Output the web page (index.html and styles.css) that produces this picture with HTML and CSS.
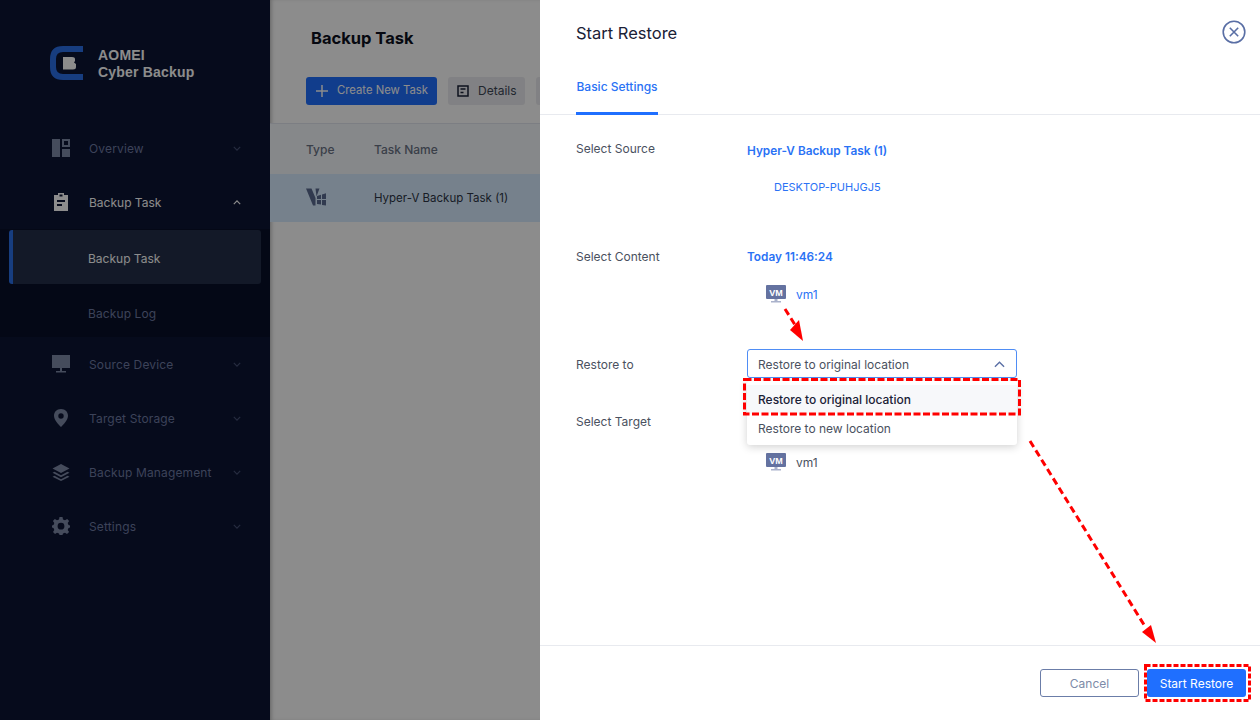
FILE: index.html
```html
<!DOCTYPE html>
<html lang="en">
<head>
<meta charset="utf-8">
<title>Start Restore</title>
<link rel="stylesheet" href="styles.css">
</head>
<body>
<div class="app">
  <aside class="sidebar">
    <div class="brand">
      <svg class="brand-logo" viewBox="0 0 34 34"><path d="M33 3H13Q3 3 3 13V21Q3 31 13 31H33" fill="none" stroke="#2a6fe8" stroke-width="6"/><path d="M13 11H22Q25 11 25 13V15L24 16.500L26 18V21Q26 23.500 23 23.500H13Z" fill="#fff"/></svg>
      <div class="brand-name">AOMEI<br>Cyber Backup</div>
    </div>
    <nav class="menu">
      <div class="menu-item"><svg class="menu-icon" viewBox="0 0 18 18"><path d="M0 0H8V18H0ZM10 0H18V8H10ZM12 2V6H16V2ZM10 10H18V18H10Z" fill-rule="evenodd"/></svg><span class="menu-label">Overview</span><svg class="chev" viewBox="0 0 10 6"><path d="M1 1L5 5L9 1"/></svg></div>
      <div class="menu-item open"><svg class="menu-icon" viewBox="0 0 18 18"><path d="M6 0H12V2H16V18H2V2H6ZM7.500 1.500V3.500H10.500V1.500ZM5 7V9H13V7ZM5 11V13H10V11Z" fill-rule="evenodd"/></svg><span class="menu-label">Backup Task</span><svg class="chev" viewBox="0 0 10 6"><path d="M1 5L5 1L9 5"/></svg></div>
      <div class="submenu">
        <div class="sub-item active">Backup Task</div>
        <div class="sub-item">Backup Log</div>
      </div>
      <div class="menu-item"><svg class="menu-icon" viewBox="0 0 18 18"><path d="M0 0H18V13H10V16H14V17.500H4V16H8V13H0Z"/></svg><span class="menu-label">Source Device</span><svg class="chev" viewBox="0 0 10 6"><path d="M1 1L5 5L9 1"/></svg></div>
      <div class="menu-item"><svg class="menu-icon" viewBox="0 0 18 18"><path d="M9 0C4.500 0 2 3.200 2 6.800C2 11 6.500 15.500 9 18C11.500 15.500 16 11 16 6.800C16 3.200 13.500 0 9 0ZM9 4.300A2.700 2.700 0 1 1 9 9.700A2.700 2.700 0 1 1 9 4.300Z" fill-rule="evenodd"/></svg><span class="menu-label">Target Storage</span><svg class="chev" viewBox="0 0 10 6"><path d="M1 1L5 5L9 1"/></svg></div>
      <div class="menu-item"><svg class="menu-icon" viewBox="0 0 18 18"><path d="M9 1L17.500 5.500L9 10L.5 5.500Z"/><path d="M2.500 8.700L9 12.200L15.500 8.700L17.500 9.800L9 14.300L.5 9.800Z"/><path d="M2.500 12.700L9 16.200L15.500 12.700L17.500 13.800L9 18L.5 13.800Z"/></svg><span class="menu-label">Backup Management</span><svg class="chev" viewBox="0 0 10 6"><path d="M1 1L5 5L9 1"/></svg></div>
      <div class="menu-item"><svg class="menu-icon" viewBox="0 0 18 18"><path d="M7.500 0H10.500L11 2.500L13 3.300L15.200 1.900L17.100 4L15.700 6.100L16.500 8L18 8.500V10.500L16.500 11L15.700 13L17.100 15L15 17L13 15.700L11 16.500L10.500 18H7.500L7 16.500L5 15.700L3 17L1 15L2.300 13L1.500 11L0 10.500V8.500L1.500 8L2.300 6.100L.9 4L2.800 1.900L5 3.300L7 2.500ZM9 5.800A3.400 3.400 0 1 0 9 12.600A3.400 3.400 0 1 0 9 5.800Z" fill-rule="evenodd"/></svg><span class="menu-label">Settings</span><svg class="chev" viewBox="0 0 10 6"><path d="M1 1L5 5L9 1"/></svg></div>
    </nav>
  </aside>
  <main class="main">
    <h1 class="page-title">Backup Task</h1>
    <div class="toolbar">
      <button class="tool primary"><svg class="tool-plus" viewBox="0 0 12 12"><path d="M6 0V12M0 6H12"/></svg><span class="tool-text">Create New Task</span></button>
      <button class="tool details"><svg class="tool-doc" viewBox="0 0 12 12"><path d="M1 1H11V11H1ZM3.500 4H8.500M3.500 7.500H6.500"/></svg><span class="tool-text">Details</span></button>
      <button class="tool blank"></button>
    </div>
    <div class="table">
      <div class="t-row t-head"><span class="c-type">Type</span><span>Task Name</span></div>
      <div class="t-row t-selected"><span class="c-type"><svg class="hv" viewBox="0 0 20 18"><path d="M0 .5H5.500L9.500 10V17.500H7ZM9.500 .5H13.500L10.500 8.500Z"/><path d="M11 8L15 6.800V11H11ZM16 6.500L20 5.300V11H16ZM11 12H15V16.500L11 16ZM16 12H20V17.500L16 17Z"/></svg></span><span class="t-name">Hyper-V Backup Task (1)</span></div>
    </div>
  </main>
</div>
<div class="overlay"></div>
<section class="drawer">
  <header class="drawer-head">
    <h2 class="drawer-title">Start Restore</h2>
    <svg class="close" viewBox="0 0 24 24"><circle cx="12" cy="12" r="10.800"/><path d="M7.800 7.800L16.200 16.200M16.200 7.800L7.800 16.200"/></svg>
  </header>
  <div class="tabs"><div class="tab">Basic Settings</div></div>
  <div class="form">
    <div class="f-row r-source">
      <div class="f-label">Select Source</div>
      <div class="f-value">
        <div class="strong-link">Hyper-V Backup Task (1)</div>
        <div class="device">DESKTOP-PUHJGJ5</div>
      </div>
    </div>
    <div class="f-row r-content">
      <div class="f-label">Select Content</div>
      <div class="f-value">
        <div class="strong-link">Today 11:46:24</div>
        <div class="vm vm-link"><svg class="vm-icon" viewBox="0 0 20 18"><rect width="20" height="14" rx="1" fill="#6472a0"/><path d="M8.500 14H11.500V16H8.500ZM5 16H15V17.500H5Z" fill="#aab2cb"/><text x="10" y="10.500" text-anchor="middle" class="vm-text">VM</text></svg><span>vm1</span></div>
      </div>
    </div>
    <div class="f-row r-restore">
      <div class="f-label">Restore to</div>
      <div class="f-value">
        <div class="select"><span>Restore to original location</span><svg class="sel-chev" viewBox="0 0 12 7"><path d="M1 6L6 1L11 6"/></svg></div>
      </div>
    </div>
    <div class="f-row r-target">
      <div class="f-label">Select Target</div>
      <div class="f-value">
        <div class="vm target-vm"><svg class="vm-icon" viewBox="0 0 20 18"><rect width="20" height="14" rx="1" fill="#6472a0"/><path d="M8.500 14H11.500V16H8.500ZM5 16H15V17.500H5Z" fill="#aab2cb"/><text x="10" y="10.500" text-anchor="middle" class="vm-text">VM</text></svg><span>vm1</span></div>
      </div>
    </div>
  </div>
  <footer class="drawer-foot">
    <button class="btn ghost">Cancel</button>
    <button class="btn solid">Start Restore</button>
  </footer>
</section>
<div class="dropdown">
  <div class="dd-item dd-on">Restore to original location</div>
  <div class="dd-item">Restore to new location</div>
</div>
<svg class="arrows" viewBox="0 0 1260 720">
  <rect class="mark-long" x="744.500" y="379.500" width="275" height="34.500"/>
  <rect class="mark-short" x="1145.500" y="665.500" width="104" height="35"/>
  <path class="dash" d="M785 309L797 328"/>
  <path class="head" d="M803 341L790 330L799 320Z"/>
  <path class="dash" d="M1030 441L1146 628"/>
  <path class="head" d="M1156 643L1142 632L1151 625Z"/>
</svg>
</body>
</html>
```
FILE: styles.css
```css
* { box-sizing: border-box; }
html, body { margin: 0; height: 100%; }
body { width: 1260px; height: 720px; overflow: hidden; position: relative; font-family: Inter, sans-serif; font-size: 12px; color: #3d4757; background: #fff; }
button { font-family: inherit; font-size: 12px; border: 0; padding: 0; }
h1, h2 { margin: 0; }

.app { display: flex; height: 720px; }
.sidebar { width: 270px; flex: none; background: #0b1433; color: #fff; }
.brand { height: 121px; padding: 46px 0 0 50px; display: flex; gap: 14px; }
.brand-logo { width: 34px; height: 34px; }
.brand-name { font-family: "Liberation Sans", sans-serif; font-weight: 700; font-size: 14px; line-height: 17px; margin-top: 1px; letter-spacing: .2px; }
.menu-item { height: 54px; display: flex; align-items: center; padding: 0 29px 0 52px; color: #6e7aa2; letter-spacing: .15px; }
.menu-item.open { color: #fff; letter-spacing: 0; }
.menu-icon { width: 18px; height: 18px; fill: #7f8aa8; flex: none; }
.open .menu-icon { fill: #fff; }
.menu-label { margin-left: 19px; flex: 1; }
.chev { width: 8px; height: 5px; fill: none; stroke: currentColor; stroke-width: 1.500; opacity: .6; }
.open .chev { opacity: 1; }
.submenu { background: #091028; height: 108px; padding-top: 2px; }
.sub-item { height: 54px; margin-left: 9px; width: 252px; padding: 2px 0 0 79px; display: flex; align-items: center; color: #6e7aa2; border-radius: 3px; letter-spacing: .1px; }
.sub-item.active { color: #fff; background: #232f49; border-left: 4px solid #2a6fe8; padding-left: 75px; margin-top: -1px; margin-bottom: 1px; letter-spacing: 0; }

.main { flex: 1; background: #fff; box-shadow: inset 3px 0 4px -2px rgba(0,0,0,.3); }
.page-title { font-size: 16.500px; font-weight: 700; color: #0c1020; line-height: 24px; padding: 26px 0 0 41px; }
.toolbar { display: flex; gap: 11px; padding: 27px 0 0 36px; }
.tool { height: 28px; border-radius: 3px; background: #ececf0; color: #3d4757; display: flex; align-items: center; padding: 0 9px; white-space: nowrap; }
.tool-text { position: relative; top: -1px; }
.tool.primary { width: 131px; background: #1f6fff; color: #fff; padding-left: 10px; font-size: 11.300px; }
.tool.details { width: 77px; }
.tool.blank { width: 60px; }
.tool-plus { width: 12px; height: 12px; margin-right: 9px; flex: none; fill: none; stroke: #fff; stroke-width: 1.500; }
.tool-doc { width: 12px; height: 12px; margin-right: 9px; flex: none; fill: none; stroke: #1a2136; stroke-width: 1.500; }
.table { margin-top: 18px; }
.t-row { display: flex; align-items: center; }
.t-head { height: 51px; background: #f5f7fb; border-top: 1px solid #e2e6ef; font-weight: 500; color: #6b7486; }
.t-selected { height: 48px; background: #d8ecff; color: #2c3445; }
.t-name { font-size: 11.500px; }
.c-type { width: 68px; margin-left: 36px; display: block; }
.hv { display: block; width: 20px; height: 18px; margin-top: -2px; fill: #5a6a90; }

.overlay { position: absolute; inset: 0; background: rgba(0,0,0,.45); }

.drawer { position: absolute; top: 0; right: 0; width: 720px; height: 720px; background: #fff; display: flex; flex-direction: column; }
.drawer-head { height: 66px; padding: 21px 14px 0 36px; display: flex; justify-content: space-between; }
.drawer-title { font-size: 16.500px; font-weight: 400; color: #1a2136; line-height: 24px; }
.close { width: 24px; height: 24px; margin-top: -1px; fill: none; stroke: #5a6fa5; stroke-width: 1.600; }
.tabs { height: 49px; border-bottom: 1px solid #e8eaef; padding-left: 36px; }
.tab { width: 82px; height: 49px; text-align: center; color: #2a72f5; font-weight: 500; line-height: 42px; border-bottom: 3px solid #1f6fff; white-space: nowrap; }

.form { flex: 1; padding: 0 0 0 36px; }
.f-row { display: flex; }
.f-label { width: 171px; flex: none; color: #4a5160; line-height: 18px; }
.f-value { flex: 1; }
.r-source { padding-top: 25px; height: 131px; }
.r-content { padding-top: 2px; height: 97px; }
.strong-link { color: #2a72f5; font-weight: 600; font-size: 11.800px; line-height: 20px; }
.r-source .strong-link { margin-top: 1px; }
.r-content .strong-link { margin-top: -1px; }
.device { color: #2a72f5; font-size: 11px; padding-left: 27px; margin-top: 17px; line-height: 18px; }
.vm { display: flex; align-items: center; gap: 10px; padding-left: 19px; height: 20px; }
.vm-link { color: #2a72f5; margin-top: 17px; }
.vm-icon { width: 20px; height: 18px; }
.vm-text { font-family: "Liberation Sans", sans-serif; font-size: 9px; font-weight: 700; fill: #fff; }
.r-restore { height: 57px; padding-top: 6px; }
.r-restore .f-label { padding-top: 7px; }
.r-target { padding-top: 13px; }
.select { width: 270px; height: 29px; border: 1px solid #4f8df5; border-radius: 3px; display: flex; align-items: center; justify-content: space-between; padding: 1px 11px 0 10px; color: #4a5160; }
.sel-chev { width: 11px; height: 7px; fill: none; stroke: #5a6fa5; stroke-width: 1.500; }
.target-vm { margin-top: 39px; color: #4a5160; }

.drawer-foot { height: 75px; border-top: 1px solid #e8eaef; display: flex; justify-content: flex-end; gap: 8px; padding: 23px 14px 0 0; }
.btn { width: 99px; height: 28px; border-radius: 3px; font-size: 12px; }
.btn.ghost { background: #fff; border: 1px solid #6b7da8; color: #7d8ba8; }
.btn.solid { background: #1f6fff; color: #fff; font-size: 12px; }

.dropdown { position: absolute; left: 747px; top: 381px; width: 270px; height: 64px; background: #fff; border-radius: 3px; box-shadow: 0 2px 8px rgba(0,0,0,.18); padding-top: 4px; }
.dd-item { height: 29px; line-height: 29px; padding-left: 11px; color: #4a5160; }
.dd-on { background: #f7f8fa; color: #1a2136; font-weight: 500; }

.arrows { position: absolute; inset: 0; width: 1260px; height: 720px; pointer-events: none; }
.mark-long { fill: none; stroke: #f00; stroke-width: 3; stroke-dasharray: 7 2.500; }
.mark-short { fill: none; stroke: #f00; stroke-width: 3; stroke-dasharray: 5 2; }
.dash { fill: none; stroke: #f00; stroke-width: 3; stroke-dasharray: 7 4; }
.head { fill: #f00; }
```
